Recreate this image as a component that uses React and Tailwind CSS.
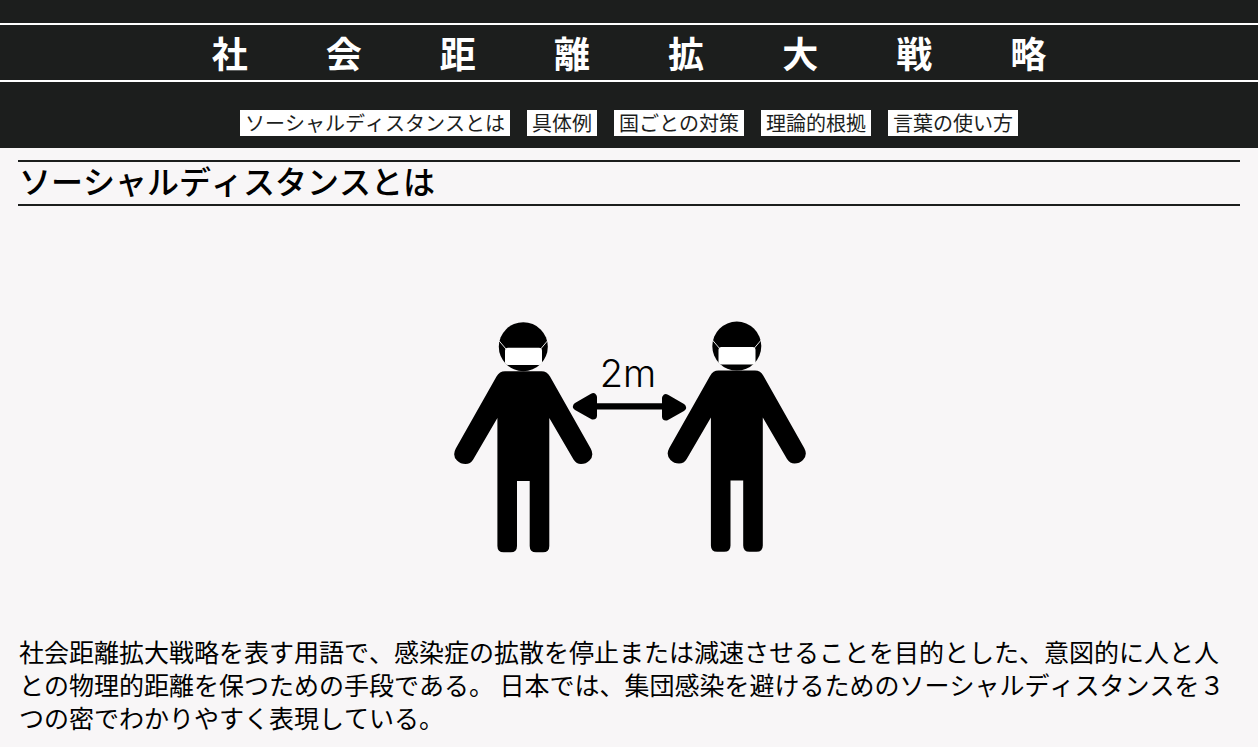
const links = [
  { id: "about", label: "ソーシャルディスタンスとは" },
  { id: "examples", label: "具体例" },
  { id: "countries", label: "国ごとの対策" },
  { id: "evidence", label: "理論的根拠" },
  { id: "usage", label: "言葉の使い方" },
];

function Person() {
  return (
    <g>
      <circle cx="73.3" cy="26.7" r="24.5" />
      <path
        d="M48.800 20.500L56 29M97.800 20.500L90.600 29"
        stroke="#fff"
        strokeWidth="0.9"
        fill="none"
      />
      <rect x="55" y="27.7" width="37" height="17.3" rx="3" fill="#fff" />
      <path d="M55 51.200H91.500Q97 51.200 100 56.500L140.700 128.500Q144.500 135.500 139.500 140.500Q136 144 131 144Q126.500 144 123.500 139.500L99.300 98V226Q99.300 232.300 93 232.300H86Q79.700 232.300 79.700 226V161H67V226Q67 232.300 60.700 232.300H53.700Q47.400 232.300 47.400 226V98L23.200 139.500Q20.500 144 15.500 144Q10.500 144 7 140.500Q2 135.500 5.800 128.500L46.500 56.500Q49.500 51.200 55 51.200Z" />
    </g>
  );
}

function DistanceFigure() {
  return (
    <svg
      viewBox="0 0 359 236"
      className="w-[359px] max-w-full"
      role="img"
      aria-label="2m"
      fill="#000"
    >
      <Person />
      <g transform="translate(213.500 -0.600)">
        <Person />
      </g>
      <path d="M146 83.200H214V89.600H146Z" />
      <path
        d="M127 86.500L143 77.300V95.500ZM232 87.500L216 78.300V96.500Z"
        stroke="#000"
        strokeWidth="8"
        strokeLinejoin="round"
      />
      <text
        x="178"
        y="67"
        textAnchor="middle"
        fontFamily="Inter, sans-serif"
        fontWeight="300"
        fontSize="38"
      >
        2m
      </text>
    </svg>
  );
}

export default function App() {
  return (
    <div className="min-h-screen bg-[#f8f6f7] font-['Noto_Sans_CJK_JP',sans-serif] text-black [font-kerning:none]">
      <header className="bg-[#1c1e1d] pt-[23px] pb-3">
        <div className="border-y-2 border-white">
          <h1 className="mx-auto w-2/3 px-0.5 text-4xl leading-[55px] font-bold text-white [text-align-last:justify]">
            社会距離拡大戦略
          </h1>
        </div>
        <nav className="mt-7 flex flex-wrap justify-center gap-[17px]">
          {links.map((link) => (
            <a
              key={link.id}
              href={`#${link.id}`}
              className="bg-white px-[5px] text-xl leading-[26px] font-normal text-[#1c1e1d]"
            >
              {link.label}
            </a>
          ))}
        </nav>
      </header>
      <main className="px-[18px] pt-3">
        <section id="about">
          <h2 className="border-y-2 border-[#1c1e1d] px-px pb-1.5 text-[32px] leading-9 font-medium">
            ソーシャルディスタンスとは
          </h2>
          <div className="flex justify-center pt-[114px] pb-[79px]">
            <DistanceFigure />
          </div>
          <p className="px-px text-[25px] leading-[33px] font-normal">
            社会距離拡大戦略を表す用語で、感染症の拡散を停止または減速させることを目的とした、意図的に人と人との物理的距離を保つための手段である。
            日本では、集団感染を避けるためのソーシャルディスタンスを３つの密でわかりやすく表現している。
          </p>
        </section>
      </main>
    </div>
  );
}
